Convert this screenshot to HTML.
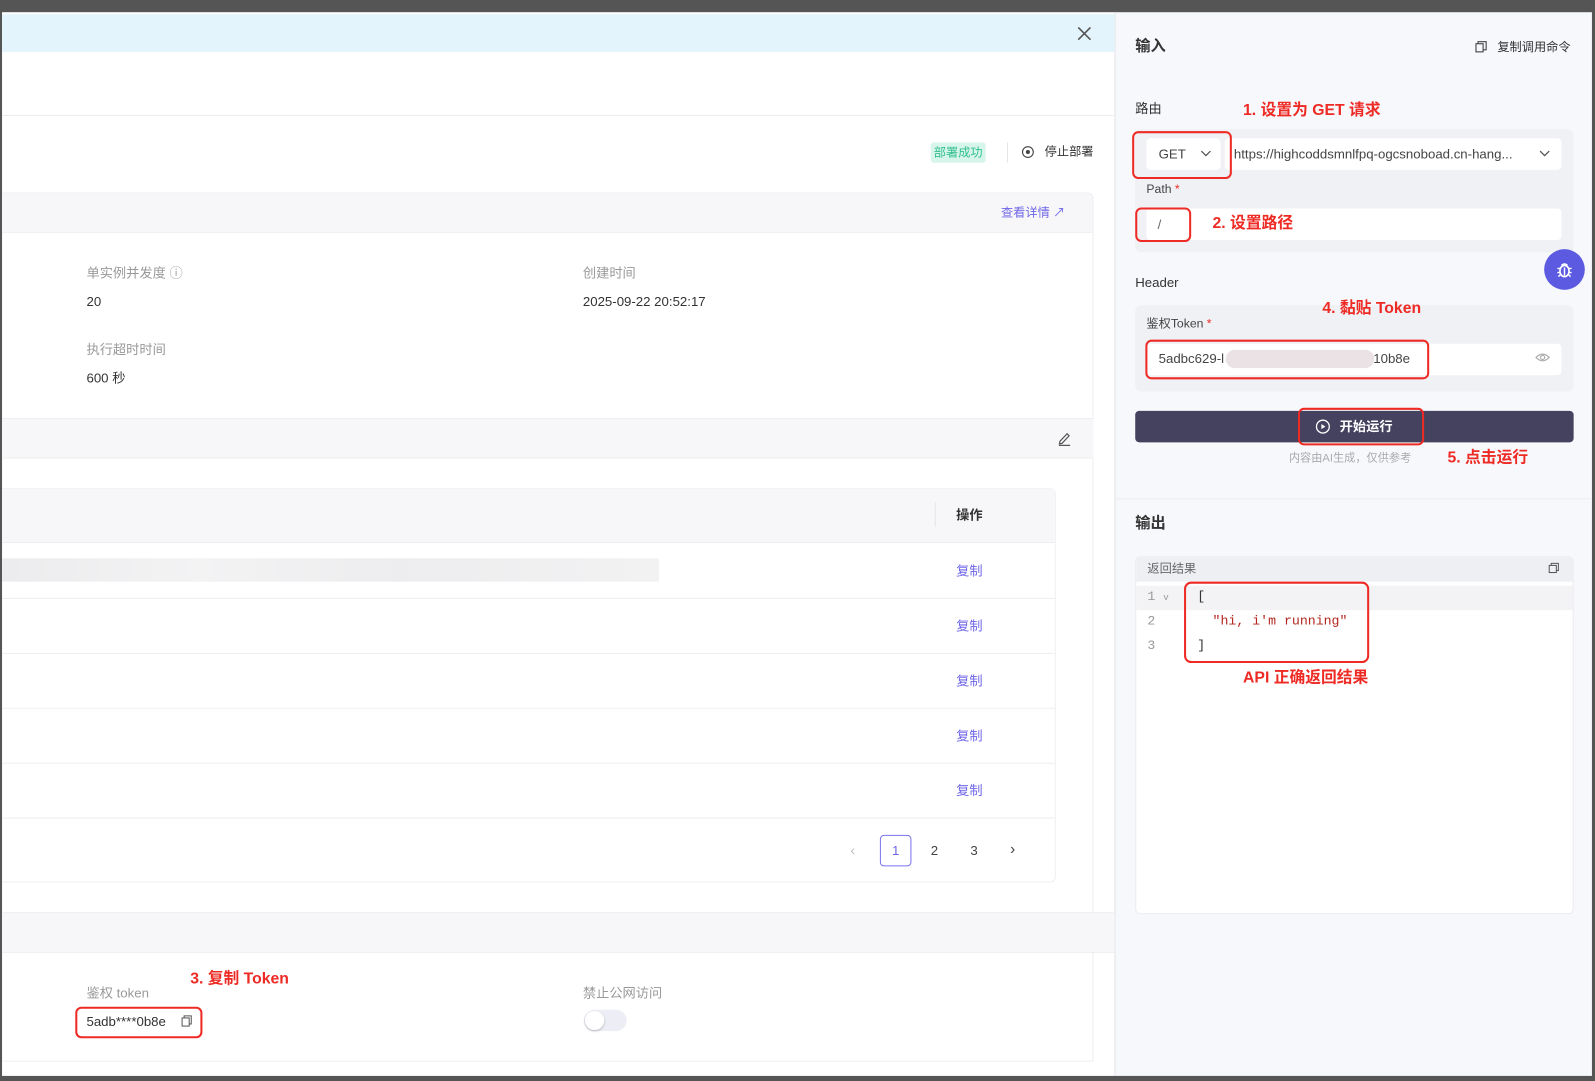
<!DOCTYPE html>
<html><head><meta charset="utf-8"><style>
*{margin:0;padding:0;box-sizing:border-box}
html,body{width:1595px;height:1081px;overflow:hidden;background:#4a4a4a}
body{font-family:"Liberation Sans","Noto Sans CJK SC",sans-serif;font-size:13px;color:#333}
#w{position:absolute;left:0;top:0;width:1568px;height:1063px;transform:scale(1.01722,1.01693);transform-origin:0 0;background:#555}
.a{position:absolute}
.t{position:absolute;white-space:nowrap;line-height:1}
.red{color:#ee2a24;font-size:15.5px;font-weight:bold}
.rb{position:absolute;border:2.5px solid #ee2a24;border-radius:6px}
.lbl{color:#999;font-size:13px}
.val{color:#333;font-size:13px}
.cp{color:#6f66e8;font-size:13px}
.in{position:absolute;background:#fff;border-radius:4px}
</style></head><body><div id="w">
<div class="a" style="left:2px;top:12px;width:1094px;height:1046px;background:#fff"></div>
<div class="a" style="left:2px;top:14px;width:1094px;height:37px;background:#e3f4fc"></div>
<svg class="a" style="left:1059px;top:26px" width="14" height="14"><path d="M1 1L13 13M13 1L1 13" stroke="#555" stroke-width="1.6"/></svg>
<div class="a" style="left:2px;top:113px;width:1093px;height:1px;background:#ececf0"></div>
<div class="t" style="left:915px;top:140px;width:54px;height:20px;background:#d7f5ea;color:#33c08f;font-size:12px;line-height:20px;text-align:center;border-radius:3px">部署成功</div>
<div class="a" style="left:990px;top:140px;width:1px;height:20px;background:#e5e5e5"></div>
<svg class="a" style="left:1004px;top:143px" width="13" height="13"><circle cx="6.5" cy="6.5" r="5.3" fill="none" stroke="#444" stroke-width="1.1"/><circle cx="6.5" cy="6.5" r="2" fill="#444"/></svg>
<div class="t" style="left:1027px;top:143px;font-size:12px;color:#333">停止部署</div>
<div class="a" style="left:2px;top:189px;width:1073px;height:40px;background:#f7f7f9;border:1px solid #eeeef2;border-left:none;border-radius:0 6px 0 0"></div>
<div class="t cp" style="left:984px;top:203px;font-size:12px">查看详情 ↗</div>
<div class="a" style="left:1074px;top:229px;width:1px;height:182px;background:#eeeef2"></div>
<div class="t lbl" style="left:85px;top:262px">单实例并发度 ⓘ</div>
<div class="t val" style="left:85px;top:290px">20</div>
<div class="t lbl" style="left:573px;top:262px">创建时间</div>
<div class="t val" style="left:573px;top:290px">2025-09-22 20:52:17</div>
<div class="t lbl" style="left:85px;top:337px">执行超时时间</div>
<div class="t val" style="left:85px;top:365px">600 秒</div>
<div class="a" style="left:2px;top:411px;width:1073px;height:40px;background:#f7f7f9;border-top:1px solid #eeeef2;border-bottom:1px solid #eeeef2"></div>
<svg class="a" style="left:1039px;top:423px" width="15" height="16"><path d="M3 11L10 3.5L12 5.5L5 13L2.5 13.5Z" fill="none" stroke="#555" stroke-width="1.2"/><path d="M2 15H13" stroke="#555" stroke-width="1.2"/></svg>
<div class="a" style="left:1074px;top:451px;width:1px;height:446px;background:#eeeef2"></div>
<div class="a" style="left:2px;top:480px;width:1036px;height:388px;border:1px solid #eeeef2;border-left:none;border-radius:0 6px 6px 0"></div>
<div class="a" style="left:2px;top:481px;width:1035px;height:53px;background:#f7f7f9;border-bottom:1px solid #eeeef2"></div>
<div class="a" style="left:919px;top:494px;width:1px;height:24px;background:#e5e5e8"></div>
<div class="t" style="left:940px;top:500px;font-weight:bold;font-size:13px;color:#333">操作</div>
<div class="a" style="left:2px;top:549px;width:646px;height:23px;background:linear-gradient(90deg,#ececee,#f3f3f4 30%,#ededef 60%,#f2f2f3)"></div>
<div class="a" style="left:2px;top:588px;width:1035px;height:1px;background:#eeeef2"></div>
<div class="a" style="left:2px;top:642px;width:1035px;height:1px;background:#eeeef2"></div>
<div class="a" style="left:2px;top:696px;width:1035px;height:1px;background:#eeeef2"></div>
<div class="a" style="left:2px;top:750px;width:1035px;height:1px;background:#eeeef2"></div>
<div class="a" style="left:2px;top:804px;width:1035px;height:1px;background:#eeeef2"></div>
<div class="t cp" style="left:940px;top:555px">复制</div>
<div class="t cp" style="left:940px;top:609px">复制</div>
<div class="t cp" style="left:940px;top:663px">复制</div>
<div class="t cp" style="left:940px;top:717px">复制</div>
<div class="t cp" style="left:940px;top:771px">复制</div>
<div class="t" style="left:836px;top:829px;color:#bbb;font-size:14px">‹</div>
<div class="t" style="left:865px;top:821px;width:31px;height:31px;border:1px solid #7b72f0;border-radius:4px;color:#6f66e8;text-align:center;line-height:29px;font-size:13px">1</div>
<div class="t" style="left:915px;top:830px;color:#444">2</div>
<div class="t" style="left:954px;top:830px;color:#444">3</div>
<div class="t" style="left:993px;top:828px;color:#444;font-size:15px">›</div>
<div class="a" style="left:2px;top:897px;width:1093px;height:40px;background:#f7f7f9;border-top:1px solid #eeeef2;border-bottom:1px solid #eeeef2"></div>
<div class="a" style="left:1074px;top:937px;width:1px;height:106px;background:#eeeef2"></div>
<div class="a" style="left:2px;top:1043px;width:1073px;height:1px;background:#eeeef2"></div>
<div class="t red" style="left:187px;top:955px">3. 复制 Token</div>
<div class="t lbl" style="left:85px;top:970px">鉴权 token</div>
<div class="t val" style="left:85px;top:998px">5adb****0b8e</div>
<svg class="a" style="left:178px;top:998px" width="11" height="12"><rect x="1" y="3" width="7" height="8" fill="none" stroke="#555" stroke-width="1"/><path d="M3 3V1H10V9H8" fill="none" stroke="#555" stroke-width="1"/></svg>
<div class="rb" style="left:74px;top:990px;width:125px;height:31px"></div>
<div class="t lbl" style="left:573px;top:970px">禁止公网访问</div>
<div class="a" style="left:574px;top:993px;width:42px;height:21px;border-radius:11px;background:#ededf6"></div>
<div class="a" style="left:575px;top:994px;width:19px;height:19px;border-radius:50%;background:#fff;box-shadow:0 1px 2px rgba(0,0,0,.25)"></div>
<div class="a" style="left:1096px;top:12px;height:1046px;width:469px;background:#f7f8fc;border-left:1px solid #ececf0"></div>
<div class="t" style="left:1116px;top:38px;font-size:15px;font-weight:bold;color:#333">输入</div>
<svg class="a" style="left:1450px;top:40px" width="12" height="12"><rect x="1" y="3" width="7" height="8" fill="none" stroke="#444" stroke-width="1.1"/><path d="M3 3V1H11V9H8" fill="none" stroke="#444" stroke-width="1.1"/></svg>
<div class="t" style="left:1472px;top:40px;font-size:12px;color:#333">复制调用命令</div>
<div class="t" style="left:1116px;top:100px;font-size:13px;color:#333">路由</div>
<div class="t red" style="left:1222px;top:101px">1. 设置为 GET 请求</div>
<div class="a" style="left:1116px;top:127px;width:431px;height:121px;background:#f0f1f5;border-radius:6px"></div>
<div class="in" style="left:1127px;top:136px;width:73px;height:31px"></div>
<div class="t" style="left:1139px;top:145px;font-size:13px;color:#444">GET</div>
<svg class="a" style="left:1180px;top:147px" width="11" height="8"><path d="M1 1.5L5.5 6L10 1.5" fill="none" stroke="#555" stroke-width="1.2"/></svg>
<div class="in" style="left:1204px;top:136px;width:331px;height:31px"></div>
<div class="t" style="left:1213px;top:145px;font-size:13px;color:#444">https://highcoddsmnlfpq-ogcsnoboad.cn-hang...</div>
<svg class="a" style="left:1513px;top:147px" width="11" height="8"><path d="M1 1.5L5.5 6L10 1.5" fill="none" stroke="#555" stroke-width="1.2"/></svg>
<div class="rb" style="left:1113px;top:129px;width:98px;height:47px"></div>
<div class="t" style="left:1127px;top:180px;font-size:12px;color:#444">Path <span style="color:#ee2a24">*</span></div>
<div class="in" style="left:1127px;top:205px;width:408px;height:31px"></div>
<div class="t" style="left:1138px;top:214px;font-size:13px;color:#666">/</div>
<div class="rb" style="left:1116px;top:204px;width:55px;height:34px"></div>
<div class="t red" style="left:1192px;top:212px">2. 设置路径</div>
<div class="a" style="left:1518px;top:245px;width:40px;height:40px;border-radius:50%;background:#5b5ae0"></div>
<svg class="a" style="left:1529px;top:256px" width="18" height="18"><ellipse cx="9" cy="10.5" rx="4.5" ry="5.5" fill="none" stroke="#fff" stroke-width="1.6"/><path d="M6 5Q9 2 12 5M2 8H5M13 8H16M2 12H4.5M13.5 12H16M3 16L5 14M15 16L13 14M9 7V15" fill="none" stroke="#fff" stroke-width="1.4"/></svg>
<div class="t" style="left:1116px;top:271px;font-size:13px;color:#333">Header</div>
<div class="a" style="left:1116px;top:300px;width:431px;height:85px;background:#f0f1f5;border-radius:6px"></div>
<div class="t red" style="left:1300px;top:296px">4. 黏贴 Token</div>
<div class="t" style="left:1127px;top:312px;font-size:12px;color:#444">鉴权Token <span style="color:#ee2a24">*</span></div>
<div class="in" style="left:1127px;top:338px;width:408px;height:31px"></div>
<div class="t" style="left:1139px;top:346px;font-size:13px;color:#444">5adbc629-l</div>
<div class="a" style="left:1205px;top:344px;width:146px;height:18px;background:#ebe2e6;border-radius:9px"></div>
<div class="t" style="left:1350px;top:346px;font-size:13px;color:#444">10b8e</div>
<svg class="a" style="left:1509px;top:346px" width="15" height="11"><path d="M1 5.5Q7.5 -1 14 5.5Q7.5 12 1 5.5Z" fill="none" stroke="#aaa" stroke-width="1.1"/><circle cx="7.5" cy="5.5" r="2" fill="none" stroke="#aaa" stroke-width="1.1"/></svg>
<div class="rb" style="left:1126px;top:334px;width:279px;height:39px"></div>
<div class="a" style="left:1116px;top:404px;width:431px;height:31px;background:#45425f;border-radius:4px"></div>
<svg class="a" style="left:1293px;top:412px" width="15" height="15"><circle cx="7.5" cy="7.5" r="6.3" fill="none" stroke="#fff" stroke-width="1.3"/><path d="M6 5V10L10 7.5Z" fill="#fff"/></svg>
<div class="t" style="left:1317px;top:413px;font-size:13px;color:#fff;font-weight:bold">开始运行</div>
<div class="rb" style="left:1276px;top:401px;width:124px;height:37px"></div>
<div class="t" style="left:1267px;top:446px;font-size:11px;color:#aaa">内容由AI生成，仅供参考</div>
<div class="t red" style="left:1423px;top:443px">5. 点击运行</div>
<div class="a" style="left:1097px;top:490px;width:468px;height:1px;background:#ececf0"></div>
<div class="t" style="left:1116px;top:507px;font-size:15px;font-weight:bold;color:#333">输出</div>
<div class="a" style="left:1116px;top:547px;width:431px;height:352px;background:#fff;border:1px solid #ececf0;border-radius:5px;overflow:hidden">
 <div class="a" style="left:0;top:0;width:431px;height:24px;background:#eeeff3"></div>
 <div class="a" style="left:0;top:28px;width:431px;height:24px;background:#f3f3f5"></div>
</div>
<div class="t" style="left:1128px;top:553px;font-size:12px;color:#666">返回结果</div>
<svg class="a" style="left:1522px;top:553px" width="11" height="11"><rect x="1" y="3" width="7" height="7" fill="none" stroke="#555" stroke-width="1"/><path d="M3 3V1H10V8H8" fill="none" stroke="#555" stroke-width="1"/></svg>
<div class="t" style="left:1128px;top:580px;font-family:'Liberation Mono',monospace;font-size:13px;color:#999">1 <span style="font-size:9px">v</span></div>
<div class="t" style="left:1128px;top:604px;font-family:'Liberation Mono',monospace;font-size:13px;color:#999">2</div>
<div class="t" style="left:1128px;top:628px;font-family:'Liberation Mono',monospace;font-size:13px;color:#999">3</div>
<div class="t" style="left:1177px;top:580px;font-family:'Liberation Mono',monospace;font-size:13px;color:#333">[</div>
<div class="t" style="left:1192px;top:604px;font-family:'Liberation Mono',monospace;font-size:13px;color:#b3261e">"hi, i'm running"</div>
<div class="t" style="left:1177px;top:628px;font-family:'Liberation Mono',monospace;font-size:13px;color:#333">]</div>
<div class="rb" style="left:1164px;top:572px;width:182px;height:80px;border-radius:7px"></div>
<div class="t red" style="left:1222px;top:659px">API 正确返回结果</div>
</div></body></html>
